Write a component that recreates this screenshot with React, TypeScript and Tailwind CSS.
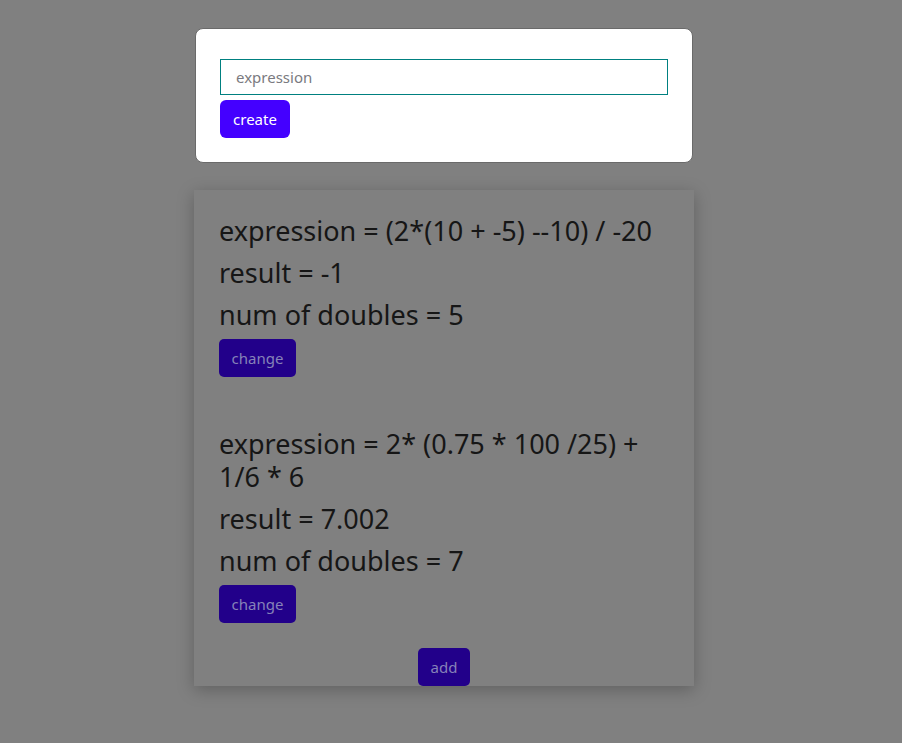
import React from "react";

const items = [
  { expr: "(2*(10 + -5) --10) / -20", result: "-1", doubles: "5" },
  { expr: "2* (0.75 * 100 /25) + 1/6 * 6", result: "7.002", doubles: "7" },
];

export default function App() {
  return (
    <div
      className="min-h-[743px] w-full bg-[#808080] pr-[14px] pt-[28px]"
      style={{ fontFamily: '"Noto Sans", "Open Sans", sans-serif' }}
    >
      <div className="mx-auto flex w-[498px] flex-col items-start rounded-[8px] border border-[#6a6a6a] bg-white px-[24px] pb-[24px] pt-[30px]">
        <input
          placeholder="expression"
          className="box-border h-[36px] w-full border border-[#008080] bg-white px-[15px] text-[15px] text-[#333] outline-none placeholder:text-[#7a7a80]"
        />
        <button className="mt-[5px] h-[38px] w-[70px] rounded-[6px] bg-[#4400ff] text-[15px] text-white">
          create
        </button>
      </div>

      <div className="mx-auto mt-[27px] flex w-[500px] flex-col bg-[#808080] px-[25px] pt-[24px] shadow-[0_4px_16px_rgba(0,0,0,0.25)]">
        {items.map((it, i) => (
          <div key={i} className={`flex flex-col items-start ${i > 0 ? "mt-[50px]" : ""}`}>
            <p className="mb-[9px] text-[27px] leading-[33px] text-[#161616]">expression = {it.expr}</p>
            <p className="mb-[9px] text-[27px] leading-[33px] text-[#161616]">result = {it.result}</p>
            <p className="mb-[8px] text-[27px] leading-[33px] text-[#161616]">num of doubles = {it.doubles}</p>
            <button className="h-[38px] w-[77px] rounded-[5px] bg-[#22008a] text-[15px] text-[#8682b8]">
              change
            </button>
          </div>
        ))}
        <div className="mt-[25px] flex justify-center">
          <button className="h-[38px] w-[52px] rounded-[5px] bg-[#22008a] text-[15px] text-[#8682b8]">
            add
          </button>
        </div>
      </div>
    </div>
  );
}
